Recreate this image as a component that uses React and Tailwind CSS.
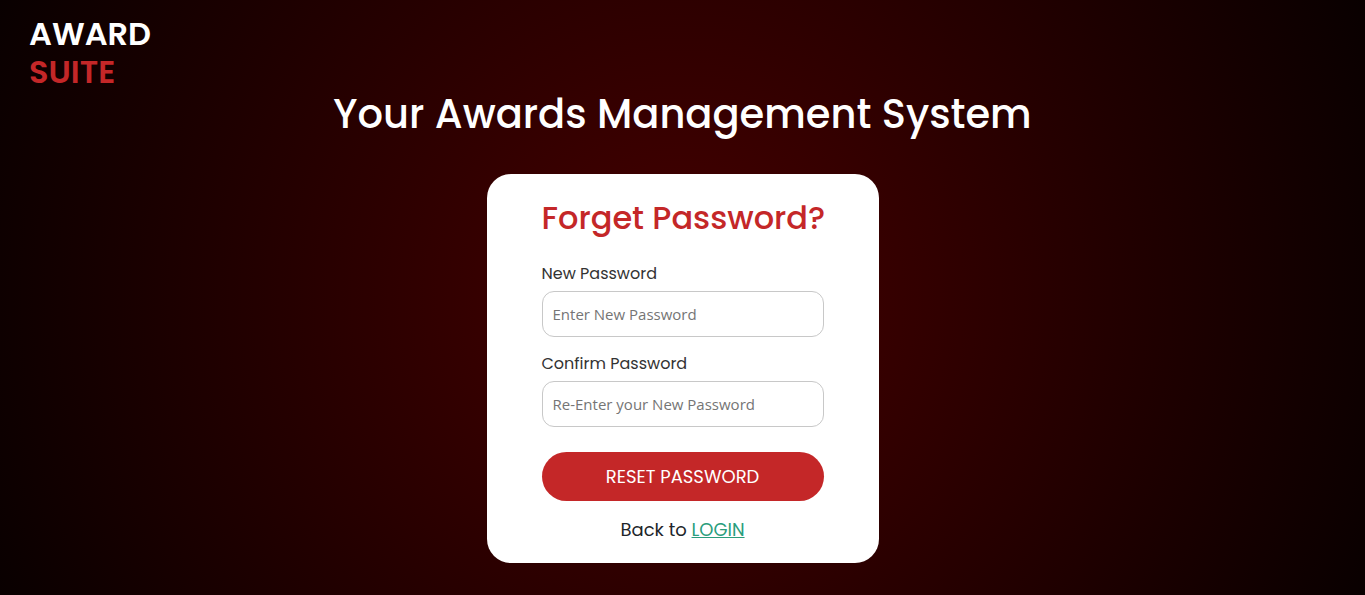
import React from "react";

function Field({ id, label, placeholder }) {
  return (
    <div className="flex flex-col gap-[5px]">
      <label htmlFor={id} className="text-base leading-6 text-[#333333]">
        {label}
      </label>
      <input
        id={id}
        type="password"
        placeholder={placeholder}
        className="h-[46px] w-full rounded-xl border border-[#c8c8c8] bg-white px-2.5 font-['Open_Sans',sans-serif] text-[15px] text-[#333333] placeholder:text-[#757575]"
      />
    </div>
  );
}

export default function App() {
  return (
    <div className="flex min-h-screen flex-col bg-black bg-[radial-gradient(circle,#460000,#090000)] pb-8 font-[Poppins,Inter,sans-serif]">
      <header className="flex flex-col px-[29px] pt-[15px] text-[32px] leading-[38px] font-semibold">
        <span className="text-white">AWARD</span>
        <span className="text-[#c42728]">SUITE</span>
      </header>
      <main className="flex flex-col items-center">
        <h1 className="text-center text-[40px] leading-[46px] font-medium text-white">
          Your Awards Management System
        </h1>
        <form
          className="mt-[37px] w-full max-w-[392px] rounded-3xl bg-white px-[55px] pt-6 pb-[21px]"
          onSubmit={(e) => e.preventDefault()}
        >
          <h2 className="text-center text-[32px] leading-10 font-medium whitespace-nowrap text-[#c42728]">
            Forget Password?
          </h2>
          <div className="mt-6 flex flex-col gap-[15px]">
            <Field id="new-password" label="New Password" placeholder="Enter New Password" />
            <Field
              id="confirm-password"
              label="Confirm Password"
              placeholder="Re-Enter your New Password"
            />
          </div>
          <button
            type="submit"
            className="mt-[25px] h-[49px] w-full rounded-full bg-[#c42728] text-lg text-white"
          >
            RESET PASSWORD
          </button>
          <p className="mt-[17px] text-center text-lg leading-6 text-[#212529]">
            Back to{" "}
            <a href="#login" className="text-[#2a9d7c] underline">
              LOGIN
            </a>
          </p>
        </form>
      </main>
    </div>
  );
}
